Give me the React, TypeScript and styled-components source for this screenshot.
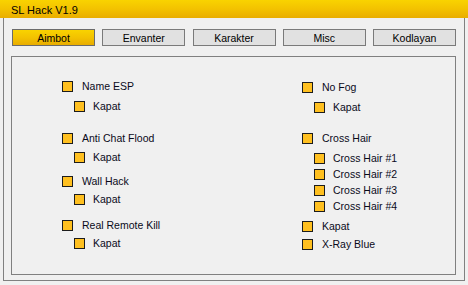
import styled, { createGlobalStyle } from "styled-components";

const GlobalStyle = createGlobalStyle`
  html, body {
    margin: 0;
    padding: 0;
    background: #f0f0f0;
  }
  body {
    font-family: "Liberation Sans", Arial, sans-serif;
  }
`;

const Window = styled.div`
  width: 468px;
  height: 285px;
  display: flex;
  flex-direction: column;
  background: #f0f0f0;
  color: #000;
  font-size: 10.5px;
`;

const TitleBar = styled.div`
  height: 18px;
  flex: none;
  display: flex;
  align-items: center;
  padding-left: 11px;
  padding-top: 1px;
  box-sizing: border-box;
  font-size: 11px;
  background: linear-gradient(to bottom, #f9d300 0%, #f3c200 50%, #e9ad00 100%);
`;

const Frame = styled.div`
  flex: 1;
  margin: 0 3px 4px;
  border: 1px solid #808080;
  border-top: none;
  padding: 11px 8px 5px 7px;
  display: flex;
  flex-direction: column;
`;

const TabBar = styled.div`
  display: flex;
  justify-content: space-between;
  padding-left: 1px;
`;

const TabButton = styled.div<{ $active?: boolean }>`
  width: 83px;
  height: 17px;
  box-sizing: border-box;
  display: flex;
  align-items: center;
  justify-content: center;
  border: 1px solid ${(p) => (p.$active ? "#6b6b6b" : "#7a7a7a")};
  background: ${(p) =>
    p.$active
      ? "linear-gradient(to bottom, #f9d300 0%, #f3c200 50%, #e9ad00 100%)"
      : "#e1e1e1"};
`;

const Panel = styled.div`
  flex: 1;
  margin-top: 10px;
  border: 1px solid #808080;
  padding: 24px 0 0 50px;
  display: grid;
  grid-template-columns: 240px 1fr;
  align-items: start;
`;

const Column = styled.div`
  display: flex;
  flex-direction: column;
`;

const Option = styled.div<{ $sub?: boolean; $space: number }>`
  display: flex;
  align-items: center;
  height: 11px;
  margin-top: ${(p) => p.$space}px;
  margin-left: ${(p) => (p.$sub ? 12 : 0)}px;
`;

const Box = styled.span`
  width: 11px;
  height: 11px;
  box-sizing: border-box;
  flex: none;
  border: 1px solid #1c1c1c;
  background: #ffc020;
`;

const Label = styled.span<{ $sub?: boolean }>`
  margin-left: ${(p) => (p.$sub ? 8 : 9)}px;
  line-height: 11px;
  white-space: nowrap;
  color: #0a0a1a;
`;

type Item = { label: string; sub?: boolean; space: number };

const left: Item[] = [
  { label: "Name ESP", space: 0 },
  { label: "Kapat", sub: true, space: 9 },
  { label: "Anti Chat Flood", space: 21 },
  { label: "Kapat", sub: true, space: 8 },
  { label: "Wall Hack", space: 13 },
  { label: "Kapat", sub: true, space: 7 },
  { label: "Real Remote Kill", space: 15 },
  { label: "Kapat", sub: true, space: 7 },
];

const right: Item[] = [
  { label: "No Fog", space: 1 },
  { label: "Kapat", sub: true, space: 9 },
  { label: "Cross Hair", space: 20 },
  { label: "Cross Hair #1", sub: true, space: 9 },
  { label: "Cross Hair #2", sub: true, space: 5 },
  { label: "Cross Hair #3", sub: true, space: 5 },
  { label: "Cross Hair #4", sub: true, space: 5 },
  { label: "Kapat", space: 9 },
  { label: "X-Ray Blue", space: 7 },
];

const tabs = ["Aimbot", "Envanter", "Karakter", "Misc", "Kodlayan"];

function renderItems(items: Item[]) {
  return items.map((it, i) => (
    <Option key={i} $sub={it.sub} $space={it.space}>
      <Box />
      <Label $sub={it.sub}>{it.label}</Label>
    </Option>
  ));
}

export default function App() {
  return (
    <>
      <GlobalStyle />
      <Window>
        <TitleBar>SL Hack V1.9</TitleBar>
        <Frame>
          <TabBar>
            {tabs.map((t, i) => (
              <TabButton key={t} $active={i === 0}>
                {t}
              </TabButton>
            ))}
          </TabBar>
          <Panel>
            <Column>{renderItems(left)}</Column>
            <Column>{renderItems(right)}</Column>
          </Panel>
        </Frame>
      </Window>
    </>
  );
}
